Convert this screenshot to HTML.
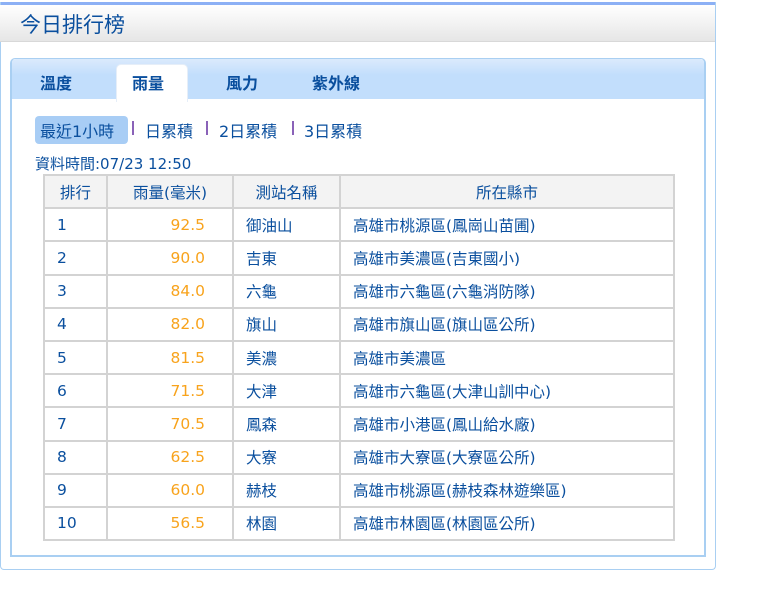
<!DOCTYPE html>
<html><head><meta charset="utf-8"><style>
body{margin:0;width:768px;height:614px;background:#fff;font-family:"DejaVu Sans","Noto Sans CJK TC",sans-serif;color:#0a4f9e;position:relative;overflow:hidden}
.outer{position:absolute;left:0;top:2px;width:714px;height:567px;border:1px solid #a9cff2;border-top:none;border-radius:0 0 4px 4px}
.topbar{position:absolute;left:0;top:2px;width:716px;height:3px;background:#8cb0f5}
.head{position:absolute;left:0;top:5px;width:715px;height:36px;background:linear-gradient(#fff,#e6e6e6);border-bottom:1px solid #d8d8d8}
.title{position:absolute;left:20px;top:4px;font-size:21px;color:#0a4f9e}
.panel{position:absolute;left:10px;top:58px;width:692px;height:496px;border:2px solid #a9cff2;border-top:1px solid #a9cff2;border-radius:5px 5px 0 0}
.strip{position:absolute;left:0;top:0;width:692px;height:40px;background:linear-gradient(#dbeafc,#c2defc 40%);border-radius:4px 4px 0 0}
.tab{position:absolute;top:11px;font-size:16px;font-weight:bold;color:#0a4f9e}
.active{position:absolute;left:104px;top:5px;width:70px;height:37px;background:#fff;border-radius:5px 5px 0 0;border:1px solid #e6eef8;border-bottom:none}
.sub{position:absolute;top:118px;font-size:16px}
.sel{position:absolute;left:35px;top:116px;width:93px;height:28px;background:#a8cdf5;border-radius:4px}
.sep{position:absolute;top:121px;width:2px;height:14px;background:#8a62b8}
table{position:absolute;left:43px;top:174px;border-collapse:collapse;font-size:15.5px}
td{border:2px solid #d3d3d3;height:31.2px;padding:0}
tr.h td{background:#f3f3f3;text-align:center}
td.r{padding-left:12px}
td.n{text-align:right;padding-right:27px;color:#f8a31c}
td.s{padding-left:12px}
td.c{padding-left:12px}
</style></head><body>
<div class="topbar"></div>
<div class="outer"></div>
<div class="head"><div class="title">今日排行榜</div></div>
<div class="panel">
<div class="strip"></div>
<div class="active"></div>
<div class="tab" style="left:28px">溫度</div>
<div class="tab" style="left:120px">雨量</div>
<div class="tab" style="left:214px">風力</div>
<div class="tab" style="left:300px">紫外線</div>
</div>
<div class="sel"></div>
<div class="sub" style="left:40px">最近1小時</div>
<div class="sep" style="left:132px"></div>
<div class="sub" style="left:145px">日累積</div>
<div class="sep" style="left:206px"></div>
<div class="sub" style="left:219px">2日累積</div>
<div class="sep" style="left:292px"></div>
<div class="sub" style="left:304px">3日累積</div>
<div class="sub" style="left:35px;top:153px;font-size:15px">資料時間:07/23 12:50</div>
<table>
<tr class="h"><td style="width:61px">排行</td><td style="width:124px">雨量(毫米)</td><td style="width:105px">測站名稱</td><td style="width:332px">所在縣市</td></tr>
<tr><td class="r">1</td><td class="n">92.5</td><td class="s">御油山</td><td class="c">高雄市桃源區(鳳崗山苗圃)</td></tr>
<tr><td class="r">2</td><td class="n">90.0</td><td class="s">吉東</td><td class="c">高雄市美濃區(吉東國小)</td></tr>
<tr><td class="r">3</td><td class="n">84.0</td><td class="s">六龜</td><td class="c">高雄市六龜區(六龜消防隊)</td></tr>
<tr><td class="r">4</td><td class="n">82.0</td><td class="s">旗山</td><td class="c">高雄市旗山區(旗山區公所)</td></tr>
<tr><td class="r">5</td><td class="n">81.5</td><td class="s">美濃</td><td class="c">高雄市美濃區</td></tr>
<tr><td class="r">6</td><td class="n">71.5</td><td class="s">大津</td><td class="c">高雄市六龜區(大津山訓中心)</td></tr>
<tr><td class="r">7</td><td class="n">70.5</td><td class="s">鳳森</td><td class="c">高雄市小港區(鳳山給水廠)</td></tr>
<tr><td class="r">8</td><td class="n">62.5</td><td class="s">大寮</td><td class="c">高雄市大寮區(大寮區公所)</td></tr>
<tr><td class="r">9</td><td class="n">60.0</td><td class="s">赫枝</td><td class="c">高雄市桃源區(赫枝森林遊樂區)</td></tr>
<tr><td class="r">10</td><td class="n">56.5</td><td class="s">林園</td><td class="c">高雄市林園區(林園區公所)</td></tr>
</table>
</body></html>
